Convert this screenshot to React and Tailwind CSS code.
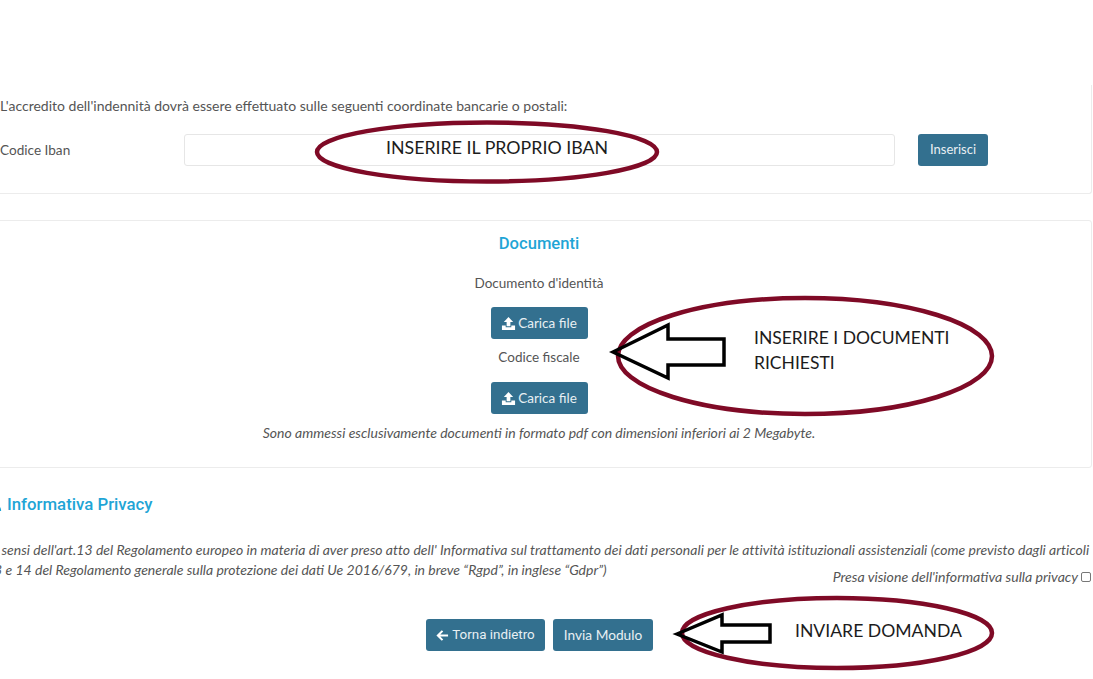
import { useState } from 'react';

function UploadIcon() {
  return (
    <svg viewBox="0 0 16 16" className="h-[15px] w-[15px] fill-white">
      <path d="M8 1 L13 6.5 H10 V11 H6 V6.5 H3 Z" />
      <path d="M1 10 H5 V12 H11 V10 H15 V15 H1 Z" />
    </svg>
  );
}

function UploadButton() {
  return (
    <button
      type="button"
      className="flex h-8 w-[97px] items-center justify-center gap-[2px] rounded-[3px] bg-[#33708f] text-[13.5px] text-[#e8eff3]"
    >
      <UploadIcon />
      Carica file
    </button>
  );
}

function Annotations() {
  return (
    <>
      <svg className="pointer-events-none absolute left-0 top-0" width="1093" height="679" fill="none">
        <ellipse cx="487" cy="152" rx="170" ry="29.5" stroke="#7f0a26" strokeWidth="4.5" />
        <ellipse cx="805" cy="356" rx="187" ry="58" stroke="#7f0a26" strokeWidth="4.5" />
        <ellipse cx="837" cy="633" rx="155" ry="35" stroke="#7f0a26" strokeWidth="4.5" />
        <path d="M613 352 L668 325 V339 H724 V365 H668 V378 Z" stroke="#000" strokeWidth="3.5" />
        <path d="M677 634 L722 615 V625 H770 V642 H722 V652 Z" stroke="#000" strokeWidth="3.5" />
      </svg>
      <span className="absolute left-[386px] top-[134px] text-[17.8px] text-[#1c1c1c]">INSERIRE IL PROPRIO IBAN</span>
      <span className="absolute left-[754px] top-[325px] text-[17.5px] leading-[25px] text-[#1c1c1c]">
        INSERIRE I DOCUMENTI
        <br />
        RICHIESTI
      </span>
      <span className="absolute left-[795px] top-[618px] text-[17.6px] text-[#1c1c1c]">INVIARE DOMANDA</span>
    </>
  );
}

export default function App() {
  const [iban, setIban] = useState('');
  const [accepted, setAccepted] = useState(false);

  return (
    <div className="relative h-[679px] w-[1093px] overflow-hidden bg-white font-['Lato',sans-serif] text-[14px] text-[#555]">
      <div className="pr-[1px] pt-[85px]">
        <section className="-ml-5 rounded-br-[3px] border border-t-0 border-[#ececec] pb-[27px] pl-[19px] pr-[103px] pt-[11px]">
          <p className="leading-5">L'accredito dell'indennità dovrà essere effettuato sulle seguenti coordinate bancarie o postali:</p>
          <div className="mt-[18px] flex items-center">
            <label className="w-[184px] text-[13.6px]">Codice Iban</label>
            <input
              value={iban}
              onChange={(event) => setIban(event.target.value)}
              className="h-8 w-[712px] rounded-[3px] border border-[#e6e6e6] px-3"
            />
            <button type="button" className="ml-[23px] h-8 w-[70px] rounded-[3px] bg-[#33708f] text-[13px] text-[#e8eff3]">
              Inserisci
            </button>
          </div>
        </section>

        <section className="-ml-5 mt-[26px] flex h-[248px] flex-col items-center rounded-[3px] border border-[#ececec] pl-[6px] pt-[11px]">
          <h2 className="font-['Roboto',sans-serif] text-[16.6px] font-medium leading-[24px] text-[#1fa5d6]">Documenti</h2>
          <p className="mt-[17px] text-[13.5px] leading-5">Documento d'identità</p>
          <div className="mt-[14px]">
            <UploadButton />
          </div>
          <p className="mt-[8px] text-[13.5px] leading-5">Codice fiscale</p>
          <div className="mt-[15px]">
            <UploadButton />
          </div>
          <p className="mt-[9px] italic leading-5">
            Sono ammessi esclusivamente documenti in formato pdf con dimensioni inferiori ai 2 Megabyte.
          </p>
        </section>

        <h2 className="-ml-[12px] mt-[24px] flex items-center gap-[4px] font-['Roboto',sans-serif] text-[16.8px] font-medium leading-[24px] text-[#1fa5d6]">
          <svg viewBox="0 0 16 16" className="h-[15px] w-[15px] fill-[#1fa5d6]">
            <circle cx="8" cy="5" r="3.5" />
            <path d="M2 15 C2 10 5 9 8 9 C11 9 14 10 14 15 Z" />
          </svg>
          Informativa Privacy
        </h2>

        <p className="-ml-[14px] mt-[24px] whitespace-nowrap italic leading-5">
          <span className="tracking-[0.02px]">
            Ai sensi dell'art.13 del Regolamento europeo in materia di aver preso atto dell' Informativa sul trattamento dei dati personali per le attività istituzionali assistenziali (come previsto dagli articoli
          </span>
          <br />
          13 e 14 del Regolamento generale sulla protezione dei dati Ue 2016/679, in breve “Rgpd”, in inglese “Gdpr”)
        </p>
        <div className="-mt-[13px] flex items-center justify-end gap-[3px] pr-[1px] italic leading-5">
          <span className="text-[14.15px]">Presa visione dell'informativa sulla privacy</span>
          <input
            type="checkbox"
            checked={accepted}
            onChange={(event) => setAccepted(event.target.checked)}
            className="h-[10px] w-[10px] appearance-none rounded-[2px] border border-[#777] bg-white"
          />
        </div>

        <div className="mt-[32px] flex justify-center gap-2 pr-[13px]">
          <button type="button" className="flex h-8 w-[119px] items-center justify-center gap-[3px] rounded-[3px] bg-[#33708f] font-['Roboto',sans-serif] text-[13.4px] text-[#e8eff3]">
            <svg viewBox="0 0 14 14" className="h-[13px] w-[13px] stroke-white" fill="none" strokeWidth="2.2">
              <path d="M13 7 H2 M7 2 L2 7 L7 12" />
            </svg>
            Torna indietro
          </button>
          <button type="button" className="h-8 w-[100px] rounded-[3px] bg-[#33708f] text-[13.7px] text-[#e8eff3]">
            Invia Modulo
          </button>
        </div>
      </div>
      <Annotations />
    </div>
  );
}
